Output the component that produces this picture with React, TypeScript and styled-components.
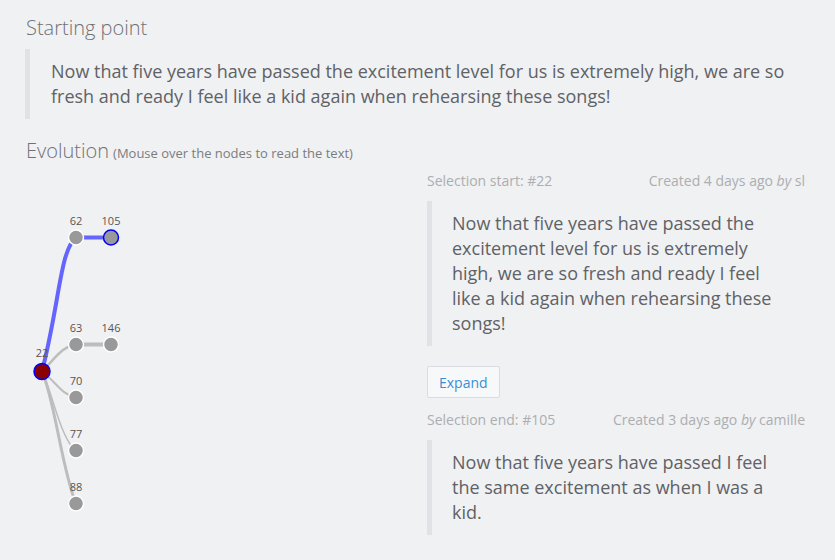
import React from "react";
import styled, { createGlobalStyle } from "styled-components";

const GlobalStyle = createGlobalStyle`
  html, body { margin: 0; padding: 0; background: #f0f1f3; }
  body { font-family: "Open Sans", "Noto Sans", sans-serif; color: #5f6266; }
  * { box-sizing: border-box; }
`;

const Page = styled.div`
  padding: 16px 30px 20px 25px;
  display: flex;
  flex-direction: column;
`;

const Heading = styled.h2<{ $gap?: number }>`
  margin: ${(p) => p.$gap ?? 0}px 0 0 1px;
  height: 24px;
  font-size: 20px;
  line-height: 24px;
  font-weight: 300;
  color: #6f7275;
`;

const Note = styled.small`
  font-size: 13px;
  line-height: 1;
  font-weight: 400;
  color: #7a7d80;
  margin-left: 4px;
`;

const Quote = styled.blockquote<{ $gap: number; $padLeft?: number }>`
  margin: ${(p) => p.$gap}px 0 0 0;
  border-left: 5px solid #e0e2e6;
  padding: 10px 20px 10px ${(p) => p.$padLeft ?? 20}px;
  font-size: 18px;
  line-height: 25px;
  color: #5f6266;
`;

const Row = styled.div`
  display: grid;
  grid-template-columns: 402px 378px;
`;

const GraphCol = styled.div`
  display: flex;
`;

const DetailCol = styled.div`
  padding-top: 8px;
  display: flex;
  flex-direction: column;
  align-items: stretch;
`;

const Meta = styled.div<{ $gap?: number }>`
  margin-top: ${(p) => p.$gap ?? 0}px;
  display: flex;
  justify-content: space-between;
  font-size: 14px;
  line-height: 20px;
  color: #acaeb1;
`;

const By = styled.em`
  font-style: italic;
`;

const Button = styled.button`
  align-self: flex-start;
  margin-top: 20px;
  height: 32px;
  padding: 0 11px;
  border: 1px solid #d9dce0;
  border-radius: 2px;
  background: #f7f8fa;
  color: #3a8fd2;
  font-family: "Open Sans", sans-serif;
  font-size: 14px;
`;

const Label = styled.text`
  font-family: "Open Sans", sans-serif;
  font-size: 11px;
  fill: #555;
`;

type N = { id: number; x: number; y: number };
const nodes: N[] = [
  { id: 62, x: 76, y: 237 },
  { id: 105, x: 111, y: 237 },
  { id: 63, x: 76, y: 344 },
  { id: 146, x: 111, y: 344 },
  { id: 70, x: 76, y: 397 },
  { id: 77, x: 76, y: 450 },
  { id: 88, x: 76, y: 503 },
  { id: 22, x: 42, y: 371 },
];

const links = [
  { d: "M42,371 C52,390 58,430 74,449", c: "#bdbdbd", w: 1.5 },
  { d: "M42,371 C55,400 62,470 76,503", c: "#bdbdbd", w: 3 },
  { d: "M42,371 C55,380 62,395 76,397", c: "#bdbdbd", w: 2 },
  { d: "M42,371 C55,358 62,346 76,344", c: "#bdbdbd", w: 2.5 },
  { d: "M76,344 L111,344", c: "#bdbdbd", w: 4 },
  { d: "M42,371 C60,300 60,250 76,237", c: "#6464ff", w: 4 },
  { d: "M76,237 L111,237", c: "#6464ff", w: 4 },
];

function Graph() {
  return (
    <svg width="402" height="380" viewBox="25 162.5 402 380">
      {links.map((l, i) => (
        <path key={i} d={l.d} fill="none" stroke={l.c} strokeWidth={l.w} />
      ))}
      {nodes.map((n) => {
        const root = n.id === 22;
        const end = n.id === 105;
        return (
          <g key={n.id}>
            <circle
              cx={n.x}
              cy={n.y}
              r={root ? 8 : 7.5}
              fill={root ? "#8b0000" : "#999"}
              stroke={root || end ? "#0000ff" : "#fff"}
              strokeWidth={1.5}
            />
            <Label x={n.x} y={n.y - (root ? 15 : 13)} textAnchor="middle">
              {n.id}
            </Label>
          </g>
        );
      })}
    </svg>
  );
}

export default function App() {
  return (
    <>
      <GlobalStyle />
      <Page>
        <Heading>Starting point</Heading>
        <Quote $gap={9} $padLeft={21}>
          Now that five years have passed the excitement level for us is extremely high, we are so
          fresh and ready I feel like a kid again when rehearsing these songs!
        </Quote>
        <Heading $gap={20}>
          Evolution<Note>(Mouse over the nodes to read the text)</Note>
        </Heading>
        <Row>
          <GraphCol>
            <Graph />
          </GraphCol>
          <DetailCol>
            <Meta>
              <span>Selection start: #22</span>
              <span>
                Created 4 days ago <By>by</By> sl
              </span>
            </Meta>
            <Quote $gap={10}>
              Now that five years have passed the excitement level for us is extremely high, we are
              so fresh and ready I feel like a kid again when rehearsing these songs!
            </Quote>
            <Button>Expand</Button>
            <Meta $gap={12}>
              <span>Selection end: #105</span>
              <span>
                Created 3 days ago <By>by</By> camille
              </span>
            </Meta>
            <Quote $gap={10}>
              Now that five years have passed I feel the same excitement as when I was a kid.
            </Quote>
          </DetailCol>
        </Row>
      </Page>
    </>
  );
}
